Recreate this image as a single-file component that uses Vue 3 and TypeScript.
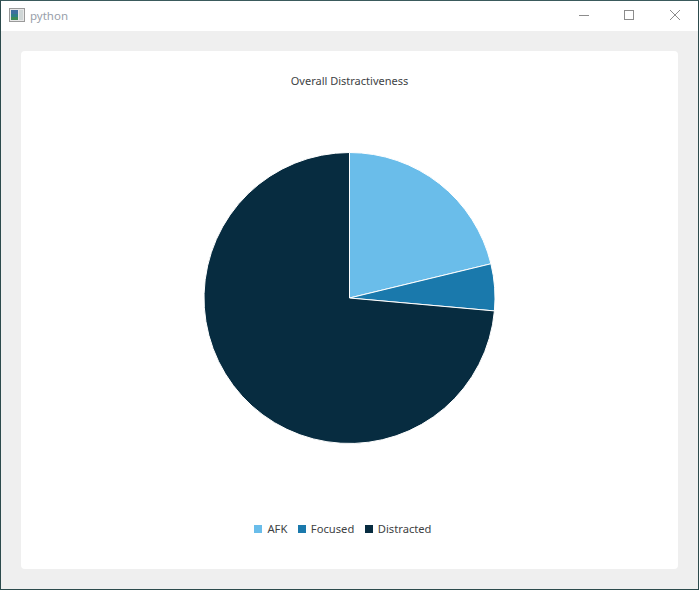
<script setup lang="ts">
const cx = 149.5, cy = 150, r = 145.5
const slices = [
  { label: 'AFK', color: '#6abdea', from: 0, to: 76.4 },
  { label: 'Focused', color: '#1a79ac', from: 76.4, to: 95.1 },
  { label: 'Distracted', color: '#072c40', from: 95.1, to: 360 },
]
function pt(a: number) {
  const t = (a * Math.PI) / 180
  return `${(cx + r * Math.sin(t)).toFixed(2)} ${(cy - r * Math.cos(t)).toFixed(2)}`
}
function arc(from: number, to: number) {
  const large = to - from > 180 ? 1 : 0
  return `M${cx} ${cy}L${pt(from)}A${r} ${r} 0 ${large} 1 ${pt(to)}Z`
}
</script>

<template>
  <div class="window">
    <header class="titlebar">
      <svg class="appicon" width="16" height="14" viewBox="0 0 16 14">
        <rect x="0.5" y="0.5" width="15" height="13" fill="#e8e8e8" stroke="#9a9a9a" />
        <rect x="2" y="2" width="7" height="10" fill="#2f7f86" />
        <rect x="2" y="2" width="7" height="4" fill="#3d6f9e" />
        <rect x="2" y="9" width="7" height="3" fill="#3c8a56" />
        <rect x="10" y="2" width="4" height="10" fill="#cfd6d6" />
      </svg>
      <span class="name">python</span>
      <div class="controls">
        <svg width="46" height="28" viewBox="0 0 46 28"><path d="M19 14.5h10" stroke="#8c8c8c" fill="none" /></svg>
        <svg width="46" height="28" viewBox="0 0 46 28"><rect x="18.5" y="9.5" width="9" height="9" stroke="#8c8c8c" fill="none" /></svg>
        <svg width="46" height="28" viewBox="0 0 46 28"><path d="M18 9l10 10M28 9l-10 10" stroke="#8c8c8c" fill="none" /></svg>
      </div>
    </header>
    <main class="content">
      <section class="card">
        <h1 class="title">Overall Distractiveness</h1>
        <div class="plot">
          <svg width="300" height="300" viewBox="0 0 300 300">
            <path
              v-for="s in slices"
              :key="s.label"
              :d="arc(s.from, s.to)"
              :fill="s.color"
              stroke="#fff"
              stroke-width="1"
            />
          </svg>
        </div>
        <ul class="legend">
          <li v-for="s in slices" :key="s.label">
            <i class="swatch" :style="{ background: s.color }"></i>{{ s.label }}
          </li>
        </ul>
      </section>
    </main>
  </div>
</template>

<style>
html, body { margin: 0; padding: 0; }
</style>

<style scoped>
.window {
  box-sizing: border-box;
  width: 699px;
  height: 590px;
  border: 1px solid #2c4a4c;
  border-top-color: #3a5a5c;
  display: flex;
  flex-direction: column;
  background: #efefef;
  font-family: "Noto Sans", "Open Sans", sans-serif;
  color: #404244;
  overflow: hidden;
}
.titlebar {
  box-sizing: border-box;
  flex: 0 0 30px;
  background: #fff;
  display: flex;
  align-items: center;
  padding: 0 0 2px 8px;
}
.appicon { margin-right: 5px; }
.name { font-size: 11.5px; color: #99a0aa; }
.controls { margin-left: auto; display: flex; align-self: flex-start; }
.controls svg { display: block; }
.content {
  flex: 1;
  display: flex;
  padding: 20px;
}
.card {
  flex: 1;
  background: #fff;
  border-radius: 4px;
  display: flex;
  flex-direction: column;
  align-items: center;
}
.title {
  margin: 21px 0 0;
  font-size: 11px;
  font-weight: 400;
  line-height: 18px;
}
.plot {
  margin-top: 58px;
  height: 300px;
}
.plot svg { display: block; }
.legend {
  list-style: none;
  margin: 72px 13px 0 0;
  padding: 0;
  display: flex;
  gap: 10.5px;
  font-size: 11.2px;
  line-height: 18px;
}
.legend li { display: flex; align-items: center; }
.swatch {
  width: 8px;
  height: 8px;
  margin-right: 5px;
}
</style>
